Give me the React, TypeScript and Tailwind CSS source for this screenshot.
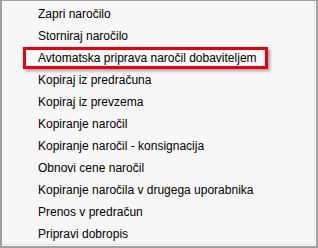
import React from "react";

const items = [
  "Zapri naročilo",
  "Storniraj naročilo",
  "Avtomatska priprava naročil dobaviteljem",
  "Kopiraj iz predračuna",
  "Kopiraj iz prevzema",
  "Kopiranje naročil",
  "Kopiranje naročil - konsignacija",
  "Obnovi cene naročil",
  "Kopiranje naročila v drugega uporabnika",
  "Prenos v predračun",
  "Pripravi dobropis",
];

export default function App() {
  return (
    <div className="w-[318px] h-[248px] bg-[#a0a0a0] pl-[2px] pr-[2px] pt-[1px] pb-[2px]">
      <div className="w-full h-full bg-white pr-[1px] pb-[1px]">
        <div
          className="w-full h-full bg-[#f7f7f7] border-r border-b border-[#e4e4e4] pt-[2px] text-[12px] text-black"
          style={{ fontFamily: '"Liberation Sans", Arial, sans-serif' }}
        >
          {items.map((t, i) => (
            <div key={i} className="relative h-[22px] flex items-center pl-[36px]">
              {i === 2 && (
                <div className="absolute left-[21px] top-0 w-[245px] h-[22px] border-[3px] border-[#e8000b] shadow-[2px_2px_3px_rgba(0,0,0,0.35)]" />
              )}
              <span className="relative leading-none">{t}</span>
            </div>
          ))}
        </div>
      </div>
    </div>
  );
}
